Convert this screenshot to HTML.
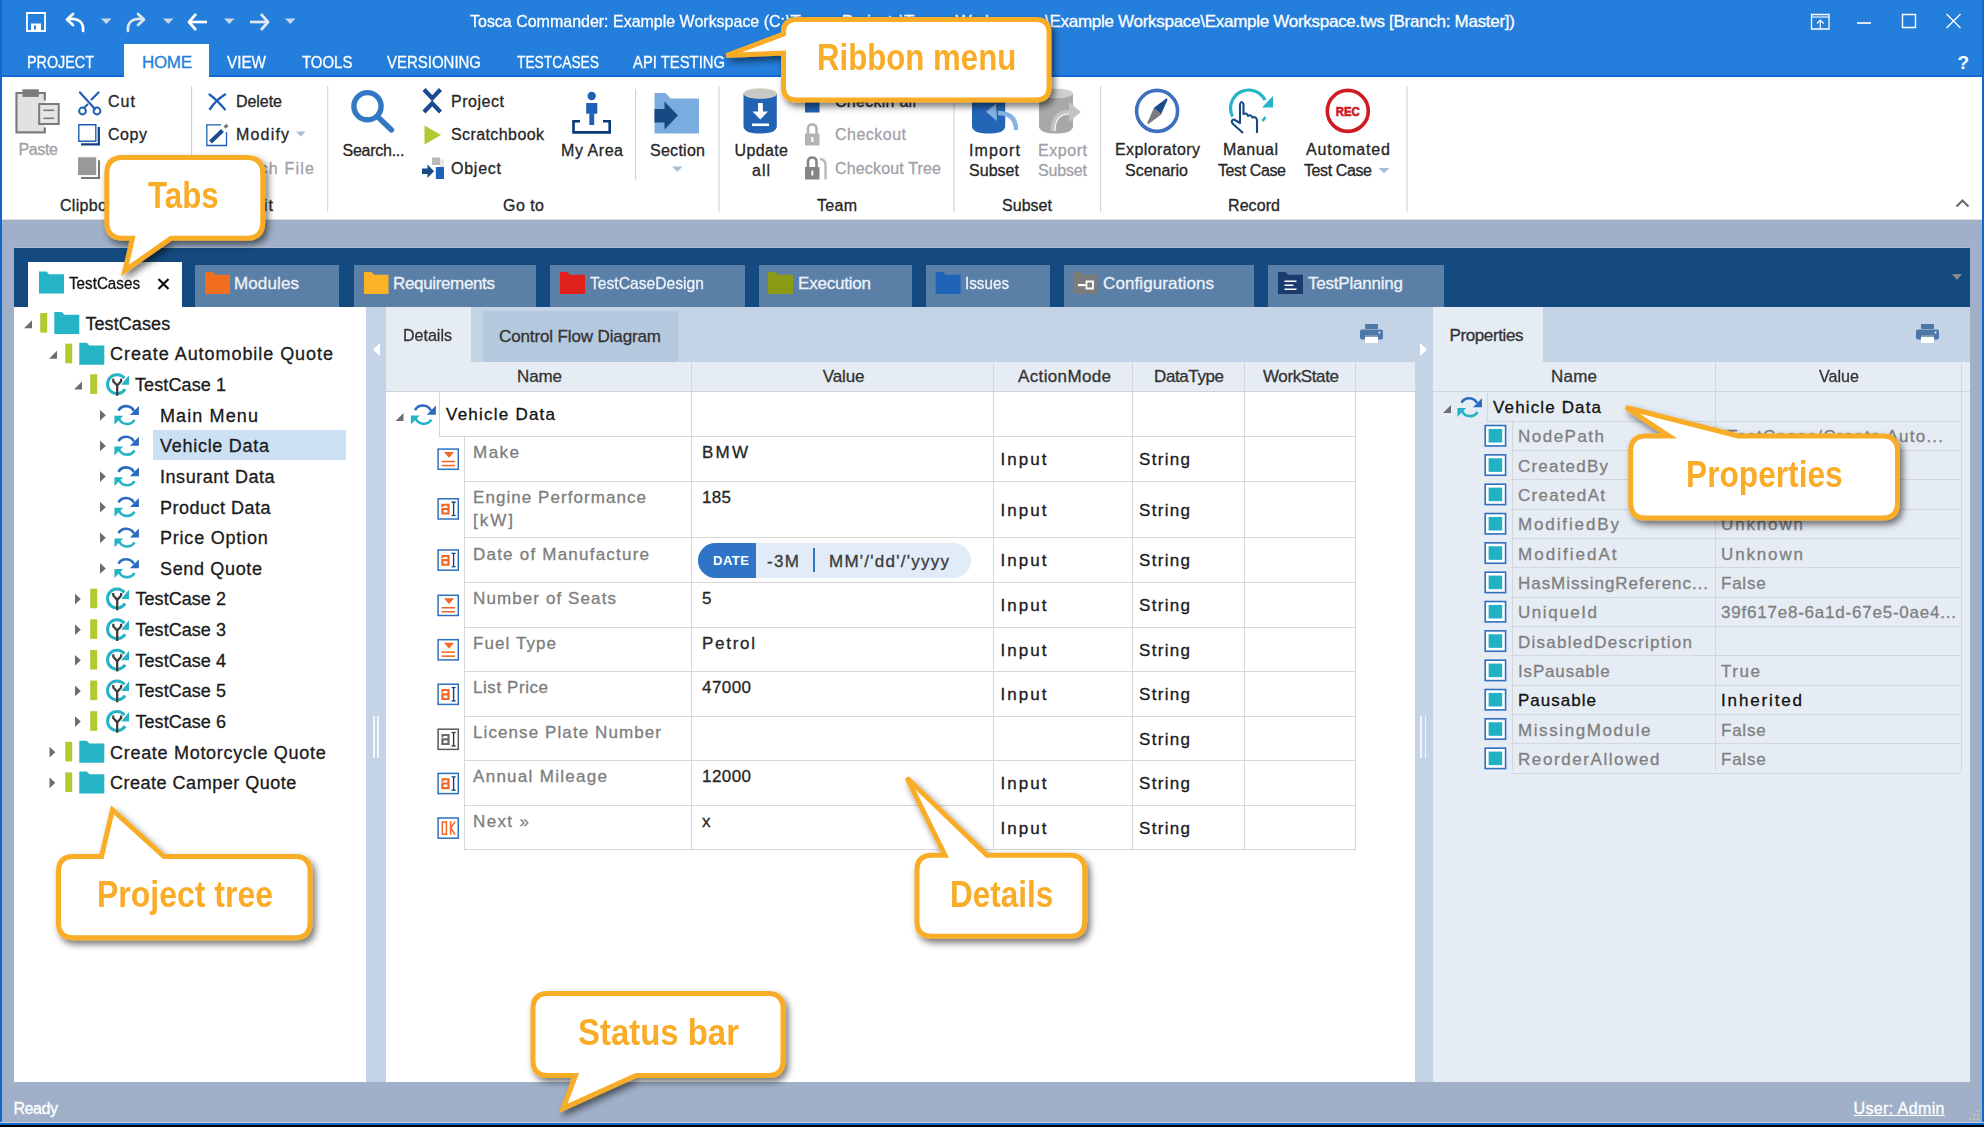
<!DOCTYPE html>
<html><head><meta charset="utf-8"><title>Tosca Commander</title>
<style>
html,body{margin:0;padding:0;}
body{width:1984px;height:1127px;overflow:hidden;position:relative;background:#a0b0c8;font-family:"Liberation Sans", sans-serif;}
div,svg{box-sizing:border-box;}
</style></head><body>
<div style="position:absolute;left:0px;top:0px;width:1984px;height:76px;background:#247edb;"></div>
<div style="position:absolute;left:0px;top:75px;width:1984px;height:1.6px;background:#0f69d4;"></div>
<div style="position:absolute;left:0px;top:76.6px;width:1984px;height:143.4px;background:#ffffff;"></div>
<div style="position:absolute;left:0px;top:219px;width:1984px;height:1px;background:#dcdcdc;"></div>
<div style="position:absolute;left:124px;top:44px;width:85px;height:33.6px;background:#ffffff;"></div>
<div style="position:absolute;left:14px;top:246.5px;width:1956px;height:1.5px;background:#adbbd0;"></div>
<div style="position:absolute;left:14px;top:248px;width:1956px;height:59px;background:#154a80;"></div>
<div style="position:absolute;left:14px;top:307px;width:352px;height:775px;background:#ffffff;"></div>
<div style="position:absolute;left:366px;top:307px;width:20px;height:775px;background:#c4d4e6;"></div>
<div style="position:absolute;left:386px;top:307px;width:1029px;height:55px;background:#c4d4e6;"></div>
<div style="position:absolute;left:386px;top:307px;width:85px;height:55px;background:#e6ecf4;"></div>
<div style="position:absolute;left:483px;top:311px;width:195px;height:51px;background:#b4c8de;"></div>
<div style="position:absolute;left:386px;top:362px;width:1029px;height:30px;background:#e6ecf4;"></div>
<div style="position:absolute;left:386px;top:391px;width:1029px;height:1px;background:#d2d2d2;"></div>
<div style="position:absolute;left:386px;top:392px;width:1029px;height:690px;background:#ffffff;"></div>
<div style="position:absolute;left:1415px;top:307px;width:18px;height:775px;background:#c4d4e6;"></div>
<div style="position:absolute;left:1433px;top:307px;width:537px;height:775px;background:#c4d4e6;"></div>
<div style="position:absolute;left:1433px;top:307px;width:110px;height:55px;background:#e6ecf4;"></div>
<div style="position:absolute;left:1433px;top:362px;width:537px;height:720px;background:#e6ecf4;"></div>
<div style="position:absolute;left:0px;top:0px;width:2px;height:1127px;background:#1068cf;"></div>
<div style="position:absolute;left:1982px;top:0px;width:2px;height:1127px;background:#1068cf;"></div>
<div style="position:absolute;left:0px;top:1122px;width:1984px;height:1px;background:#c8ced8;"></div>
<div style="position:absolute;left:0px;top:1123px;width:1984px;height:2px;background:#1068cf;"></div>
<div style="position:absolute;left:0px;top:1125px;width:1984px;height:2px;background:#000000;"></div>
<div style="position:absolute;left:28px;top:262px;width:154px;height:46px;background:#ffffff;"></div>
<div style="position:absolute;left:195px;top:265px;width:144px;height:42px;background:#5b80a8;"></div>
<div style="position:absolute;left:354px;top:265px;width:182px;height:42px;background:#5b80a8;"></div>
<div style="position:absolute;left:550px;top:265px;width:195px;height:42px;background:#5b80a8;"></div>
<div style="position:absolute;left:759px;top:265px;width:153px;height:42px;background:#5b80a8;"></div>
<div style="position:absolute;left:926px;top:265px;width:123.59999999999991px;height:42px;background:#5b80a8;"></div>
<div style="position:absolute;left:1063.7px;top:265px;width:190.79999999999995px;height:42px;background:#5b80a8;"></div>
<div style="position:absolute;left:1268px;top:265px;width:175.70000000000005px;height:42px;background:#5b80a8;"></div>
<svg style="position:absolute;left:1950px;top:272px;" width="14" height="10" viewBox="0 0 14 10"><path d="M2 2 L12 2 L7 8 Z" fill="#8a8a8a"/></svg>
<div style="position:absolute;left:153.4px;top:430.2px;width:193px;height:30.3px;background:#cce0f4;"></div>
<svg style="position:absolute;left:370px;top:340px;" width="14" height="20" viewBox="0 0 14 20"><path d="M10 3 L10 16 L3 9.5 Z" fill="#ffffff"/></svg>
<svg style="position:absolute;left:1417px;top:340px;" width="14" height="20" viewBox="0 0 14 20"><path d="M3 3 L3 16 L10 9.5 Z" fill="#ffffff"/></svg>
<div style="position:absolute;left:373px;top:716px;width:1.6px;height:41.5px;background:#f4f7fb;"></div>
<div style="position:absolute;left:377.2px;top:716px;width:1.6px;height:41.5px;background:#f4f7fb;"></div>
<div style="position:absolute;left:1420.4px;top:716px;width:1.6px;height:41.5px;background:#f4f7fb;"></div>
<div style="position:absolute;left:1424.6px;top:716px;width:1.6px;height:41.5px;background:#f4f7fb;"></div>
<div style="position:absolute;left:691px;top:362px;width:1px;height:30px;background:#d7d7d7;"></div>
<div style="position:absolute;left:993px;top:362px;width:1px;height:30px;background:#d7d7d7;"></div>
<div style="position:absolute;left:1132px;top:362px;width:1px;height:30px;background:#d7d7d7;"></div>
<div style="position:absolute;left:1244px;top:362px;width:1px;height:30px;background:#d7d7d7;"></div>
<div style="position:absolute;left:1355px;top:362px;width:1px;height:30px;background:#d7d7d7;"></div>
<div style="position:absolute;left:439px;top:392px;width:1px;height:44.4px;background:#d7d7d7;"></div>
<div style="position:absolute;left:439px;top:436px;width:917px;height:1px;background:#d7d7d7;"></div>
<div style="position:absolute;left:691px;top:392px;width:1px;height:458px;background:#d7d7d7;"></div>
<div style="position:absolute;left:993px;top:392px;width:1px;height:458px;background:#d7d7d7;"></div>
<div style="position:absolute;left:1132px;top:392px;width:1px;height:458px;background:#d7d7d7;"></div>
<div style="position:absolute;left:1244px;top:392px;width:1px;height:458px;background:#d7d7d7;"></div>
<div style="position:absolute;left:1355px;top:392px;width:1px;height:458px;background:#d7d7d7;"></div>
<div style="position:absolute;left:464px;top:436px;width:1px;height:414px;background:#d7d7d7;"></div>
<div style="position:absolute;left:464px;top:481px;width:892px;height:1px;background:#d7d7d7;"></div>
<div style="position:absolute;left:464px;top:537px;width:892px;height:1px;background:#d7d7d7;"></div>
<div style="position:absolute;left:464px;top:582px;width:892px;height:1px;background:#d7d7d7;"></div>
<div style="position:absolute;left:464px;top:627px;width:892px;height:1px;background:#d7d7d7;"></div>
<div style="position:absolute;left:464px;top:671px;width:892px;height:1px;background:#d7d7d7;"></div>
<div style="position:absolute;left:464px;top:716px;width:892px;height:1px;background:#d7d7d7;"></div>
<div style="position:absolute;left:464px;top:760px;width:892px;height:1px;background:#d7d7d7;"></div>
<div style="position:absolute;left:464px;top:805px;width:892px;height:1px;background:#d7d7d7;"></div>
<div style="position:absolute;left:464px;top:849px;width:892px;height:1px;background:#d7d7d7;"></div>
<div style="position:absolute;left:697.5px;top:542.8px;width:273px;height:35px;border-radius:17.5px;background:#e1ecf8;overflow:hidden"><div style="position:absolute;left:0;top:0;width:58.5px;height:35px;background:#2f74c6"></div></div>
<div style="position:absolute;left:813px;top:548px;width:2px;height:24px;background:#2f74c6;"></div>
<div style="position:absolute;left:1714.5px;top:362px;width:1px;height:30px;background:#d3d6dc;"></div>
<div style="position:absolute;left:1960.5px;top:362px;width:1px;height:30px;background:#d3d6dc;"></div>
<div style="position:absolute;left:1433px;top:391px;width:537px;height:1px;background:#d3d6dc;"></div>
<div style="position:absolute;left:1486.5px;top:392px;width:1px;height:29px;background:#d3d6dc;"></div>
<div style="position:absolute;left:1486px;top:421px;width:475px;height:1px;background:#d3d6dc;"></div>
<div style="position:absolute;left:1511px;top:450px;width:450px;height:1px;background:#d3d6dc;"></div>
<div style="position:absolute;left:1511px;top:479px;width:450px;height:1px;background:#d3d6dc;"></div>
<div style="position:absolute;left:1511px;top:509px;width:450px;height:1px;background:#d3d6dc;"></div>
<div style="position:absolute;left:1511px;top:538px;width:450px;height:1px;background:#d3d6dc;"></div>
<div style="position:absolute;left:1511px;top:567px;width:450px;height:1px;background:#d3d6dc;"></div>
<div style="position:absolute;left:1511px;top:597px;width:450px;height:1px;background:#d3d6dc;"></div>
<div style="position:absolute;left:1511px;top:626px;width:450px;height:1px;background:#d3d6dc;"></div>
<div style="position:absolute;left:1511px;top:655px;width:450px;height:1px;background:#d3d6dc;"></div>
<div style="position:absolute;left:1511px;top:685px;width:450px;height:1px;background:#d3d6dc;"></div>
<div style="position:absolute;left:1511px;top:714px;width:450px;height:1px;background:#d3d6dc;"></div>
<div style="position:absolute;left:1511px;top:743px;width:450px;height:1px;background:#d3d6dc;"></div>
<div style="position:absolute;left:1511px;top:773px;width:450px;height:1px;background:#d3d6dc;"></div>
<div style="position:absolute;left:1511.5px;top:421px;width:1px;height:350px;background:#d3d6dc;"></div>
<div style="position:absolute;left:1714.5px;top:392px;width:1px;height:379px;background:#d3d6dc;"></div>
<div style="position:absolute;left:1960.5px;top:392px;width:1px;height:379px;background:#d3d6dc;"></div>
<svg style="position:absolute;left:0px;top:0px;" width="1984" height="1127" viewBox="0 0 1984 1127"><path d="M27,13 H45 V31 H27 Z" stroke="#ffffff" stroke-width="1.8" fill="none" /><rect x="31.00" y="23.50" width="10.00" height="7.50" fill="#ffffff" /><rect x="34.00" y="25.50" width="2.00" height="4.00" fill="#247edb" /><path d="M83,31 C84,22 78,18 70,19" stroke="#ffffff" stroke-width="2.7" fill="none" stroke-linecap="round"/><path d="M73,14 L67,19.5 L73,25" stroke="#ffffff" stroke-width="2.7" fill="none" stroke-linecap="round" stroke-linejoin="round"/><path d="M128,31 C127,22 133,18 141,19" stroke="#dfe6ee" stroke-width="2.7" fill="none" stroke-linecap="round"/><path d="M138,14 L144,19.5 L138,25" stroke="#dfe6ee" stroke-width="2.7" fill="none" stroke-linecap="round" stroke-linejoin="round"/><path d="M189,22 H207" stroke="#ffffff" stroke-width="2.7" fill="none" /><path d="M196,14 L189,22 L196,30" stroke="#ffffff" stroke-width="2.7" fill="none" stroke-linejoin="round"/><path d="M250,22 H268" stroke="#e2e8ef" stroke-width="2.7" fill="none" /><path d="M261,14 L268,22 L261,30" stroke="#e2e8ef" stroke-width="2.7" fill="none" stroke-linejoin="round"/><polygon points="101.00,18.50 111.50,18.50 106.25,24.00" fill="#c9d6e6"/><polygon points="163.00,18.50 173.50,18.50 168.25,24.00" fill="#c9d6e6"/><polygon points="224.00,18.50 234.50,18.50 229.25,24.00" fill="#c9d6e6"/><polygon points="285.00,18.50 295.50,18.50 290.25,24.00" fill="#c9d6e6"/><path d="M1811.5,14.5 H1829 V29 H1811.5 Z" stroke="#ffffff" stroke-width="1.3" fill="none" /><path d="M1811.5,17 H1829" stroke="#ffffff" stroke-width="1.1" fill="none" /><path d="M1820.3,29 V20" stroke="#ffffff" stroke-width="1.2" fill="none" /><path d="M1817,23.5 L1820.3,20 L1823.6,23.5" stroke="#ffffff" stroke-width="1.2" fill="none" /><rect x="1857.00" y="22.20" width="14.00" height="1.60" fill="#ffffff" /><path d="M1902.5,14.5 H1915.5 V27.5 H1902.5 Z" stroke="#ffffff" stroke-width="1.4" fill="none" /><path d="M1946.5,14 L1960.5,28 M1960.5,14 L1946.5,28" stroke="#ffffff" stroke-width="1.3" fill="none" /><text x="1957.5" y="69" font-family="Liberation Sans" font-weight="700" font-size="19" fill="#ffffff">?</text><rect x="17.50" y="94.00" width="27.00" height="37.50" fill="#e2e2e2" /><path d="M44.8,100.5 V93 H16.5 V132.3 H44.8 V127.5" stroke="#7b7b7b" stroke-width="2.2" fill="none" /><rect x="22.40" y="89.30" width="16.40" height="7.60" fill="#7b7b7b" /><path d="M39.2,104 H58.7 V124 H39.2 Z" stroke="#7b7b7b" stroke-width="2" fill="#e6e6e6" /><rect x="43.30" y="109.50" width="11.00" height="1.60" fill="#7b7b7b" /><rect x="43.30" y="117.50" width="11.00" height="1.60" fill="#7b7b7b" /><path d="M80,92.4 L95,109" stroke="#1f5fb5" stroke-width="2.2" fill="none" stroke-linecap="round"/><path d="M98.5,92.4 L91.5,99.5" stroke="#1f5fb5" stroke-width="2.2" fill="none" stroke-linecap="round"/><circle cx="82.5" cy="111" r="3.4" stroke="#1f5fb5" stroke-width="2" fill="none"/><circle cx="97" cy="111" r="3.4" stroke="#1f5fb5" stroke-width="2" fill="none"/><path d="M84,108 L88,104" stroke="#1f5fb5" stroke-width="2" fill="none" /><path d="M78.8,124.8 H95.8 V141.3 H78.8 Z" stroke="#1f5fb5" stroke-width="1.4" fill="#ffffff" /><path d="M81,144.3 H98.8 V127" stroke="#0d3f82" stroke-width="2.2" fill="none" /><rect x="78.00" y="157.30" width="18.20" height="17.80" fill="#999999" /><path d="M81,178 H99 V160.2" stroke="#777777" stroke-width="2" fill="none" /><path d="M209.5,94.5 Q217,100 225,109.5" stroke="#1f5fb5" stroke-width="2.2" fill="none" stroke-linecap="round"/><path d="M225,94.5 Q216,100 210,109" stroke="#1f5fb5" stroke-width="2.4" fill="none" stroke-linecap="round"/><path d="M221,124.8 H206.8 V145.5 H226.5 V132" stroke="#1f5fb5" stroke-width="1.3" fill="none" /><path d="M210.5,142 L222.5,130.5" stroke="#1b4d8d" stroke-width="4" fill="none" stroke-linecap="butt"/><path d="M224.5,127.5 L227.5,125" stroke="#777777" stroke-width="3" fill="none" /><rect x="191.10" y="86.00" width="1.00" height="126.00" fill="#d0d0d0" /><rect x="327.20" y="86.00" width="1.00" height="126.00" fill="#d0d0d0" /><rect x="635.10" y="89.00" width="1.00" height="91.00" fill="#d0d0d0" /><rect x="718.50" y="86.00" width="1.00" height="126.00" fill="#d0d0d0" /><rect x="953.50" y="86.00" width="1.00" height="126.00" fill="#d0d0d0" /><rect x="1100.20" y="86.00" width="1.00" height="126.00" fill="#d0d0d0" /><rect x="1406.50" y="86.00" width="1.00" height="126.00" fill="#d0d0d0" /><circle cx="367.5" cy="106.2" r="13.6" stroke="#3278c2" stroke-width="5.4" fill="none"/><path d="M379.5,118.5 L391.5,130" stroke="#3278c2" stroke-width="5.4" fill="none" stroke-linecap="round"/><path d="M424,89.5 L432.2,98.3 L440.5,89.5" stroke="#1b4a90" stroke-width="4.2" fill="none" /><path d="M424,112 L432.2,103.2 L440.5,112" stroke="#1b4a90" stroke-width="4.2" fill="none" /><polygon points="424.50,125.50 441.00,135.00 424.50,144.50" fill="#b1c933"/><rect x="432.00" y="157.50" width="8.00" height="7.50" fill="#b9b9b9" /><rect x="440.00" y="159.50" width="4.00" height="7.50" fill="#ece6dc" /><rect x="435.80" y="167.00" width="8.20" height="12.00" fill="#1f63b8" /><polygon points="422.00,168.50 427.50,168.50 427.50,164.50 434.00,171.30 427.50,178.00 427.50,174.00 422.00,174.00" fill="#1a4b85"/><circle cx="591.7" cy="96" r="4.2" fill="#1f60b6"/><rect x="586.20" y="103.00" width="11.10" height="10.70" fill="#1f60b6" /><rect x="589.30" y="113.50" width="4.90" height="11.50" fill="#1f60b6" /><path d="M580,121.3 H573.5 V132.4 H609.7 V121.3 H603" stroke="#0a3a78" stroke-width="2.6" fill="none" /><polygon points="654.50,93.00 665.50,93.00 670.50,98.50 699.00,98.50 699.00,133.50 654.50,133.50" fill="#7aacdf"/><polygon points="654.50,109.00 664.50,109.00 664.50,101.50 678.00,115.50 664.50,129.50 664.50,122.50 654.50,122.50" fill="#174a82"/><polygon points="672.00,166.50 682.50,166.50 677.25,172.00" fill="#a9bdd7"/><polygon points="296.00,131.50 305.50,131.50 300.75,136.50" fill="#a9bdd7"/><path d="M743.5,94 V126 Q743.5,133.5 760,133.5 Q776.8,133.5 776.8,126 V94 Z" stroke="none" stroke-width="1" fill="#2162b4" /><ellipse cx="760.2" cy="93.5" rx="16.6" ry="4.8" fill="#c7c7c7" stroke="#ddd2c0" stroke-width="1"/><rect x="758.00" y="103.00" width="4.80" height="10.00" fill="#ffffff" /><polygon points="752.50,111.50 768.00,111.50 760.30,119.50" fill="#ffffff"/><rect x="752.00" y="123.50" width="17.00" height="2.60" fill="#ffffff" /><rect x="805.00" y="102.00" width="14.50" height="10.50" fill="#2162b4" /><rect x="805.00" y="133.50" width="14.50" height="12.00" fill="#b3b3b3" /><path d="M808,134 V129 Q808,124.5 812.2,124.5 Q816.5,124.5 816.5,129 V134" stroke="#b3b3b3" stroke-width="2.6" fill="none" /><rect x="811.30" y="137.00" width="2.00" height="5.00" fill="#ffffff" /><rect x="805.00" y="167.00" width="14.50" height="12.50" fill="#858585" /><path d="M808,167.5 V162 Q808,157.5 812.2,157.5 Q816.5,157.5 816.5,162 V167.5" stroke="#858585" stroke-width="2.6" fill="none" /><rect x="811.30" y="170.50" width="2.00" height="5.00" fill="#ffffff" /><path d="M820,159 Q825.5,159.5 825.5,165 V179.5" stroke="#b8b8b8" stroke-width="2.4" fill="none" /><path d="M972,94 V126 Q972,133.5 988.5,133.5 Q1005.2,133.5 1005.2,126 V94 Z" stroke="none" stroke-width="1" fill="#2465b6" /><path d="M1016,130 Q1016,113 998,113" stroke="#86b4e2" stroke-width="4.5" fill="none" /><polygon points="986.00,111.80 996.00,103.50 997.00,121.00" fill="#86b4e2"/><path d="M1039,94 V126 Q1039,133.5 1056,133.5 Q1073,133.5 1073,126 V94 Z" stroke="none" stroke-width="1" fill="#a8a8a8" /><ellipse cx="1056" cy="93.5" rx="17" ry="4.8" fill="#cfcfcf"/><path d="M1053,131 Q1053,112 1070,112" stroke="#c4c4c4" stroke-width="4.5" fill="none" /><polygon points="1081.00,112.00 1069.00,102.00 1069.00,122.00" fill="#c4c4c4"/><path d="M1055,131 Q1055,114 1069,114" stroke="#ffffff" stroke-width="1.2" fill="none" /><circle cx="1157.1" cy="110.9" r="20.5" stroke="#3f70c0" stroke-width="3.6" fill="none"/><path d="M1166.5,99.5 L1154.6,108.6 L1160.4,113.4 Z" stroke="#1a4b8c" stroke-width="2" fill="#1a4b8c" stroke-linejoin="round"/><path d="M1154.3,109.3 L1148.3,123 L1160,114.1 Z" stroke="#7d7d80" stroke-width="2" fill="#7d7d80" stroke-linejoin="round"/><path d="M1232.5,116.5 A17,17 0 0 1 1265,100" stroke="#25b5c8" stroke-width="3.2" fill="none" /><polygon points="1273.00,96.00 1273.00,107.50 1262.00,107.50" fill="#25b5c8"/><path d="M1262.5,121 L1265.5,117" stroke="#25b5c8" stroke-width="2.5" fill="none" /><path d="M1243,133 L1233,124 Q1230,120 1234,119.5 L1240,123 V104 Q1241.5,100 1243.5,104 V114 Q1247,112.5 1248,116 Q1251,114 1252.5,117.5 Q1256,116 1257,120 V133" stroke="#174a85" stroke-width="2.1" fill="none" stroke-linejoin="round"/><circle cx="1347.8" cy="110.9" r="20.5" stroke="#d01a22" stroke-width="3.6" fill="none"/><text x="1347.8" y="115.6" text-anchor="middle" font-family="Liberation Sans" font-weight="700" font-size="13.5" fill="#d01a22" stroke="#d01a22" stroke-width="0.7" transform="translate(1347.8 0) scale(0.84 1) translate(-1347.8 0)">REC</text><polygon points="1378.50,168.00 1389.50,168.00 1384.00,173.50" fill="#a9bdd7"/><path d="M1956.5,206.5 L1962.5,200.5 L1968.5,206.5" stroke="#6a6a6a" stroke-width="2.2" fill="none" /><polygon points="39.00,271.50 46.50,271.50 49.10,274.30 64.00,274.30 64.00,293.50 39.00,293.50" fill="#24b4c6"/><path d="M158.5,279 L168.5,289 M168.5,279 L158.5,289" stroke="#111111" stroke-width="2.2" fill="none" /><polygon points="205.00,272.00 212.50,272.00 215.10,274.80 230.00,274.80 230.00,294.00 205.00,294.00" fill="#f26e1f"/><polygon points="364.00,272.00 371.50,272.00 374.10,274.80 388.50,274.80 388.50,294.00 364.00,294.00" fill="#fcb225"/><polygon points="560.00,272.00 567.50,272.00 570.10,274.80 585.00,274.80 585.00,294.00 560.00,294.00" fill="#e0211b"/><polygon points="768.00,272.00 775.50,272.00 778.10,274.80 793.00,274.80 793.00,294.00 768.00,294.00" fill="#8a9a14"/><polygon points="935.60,272.00 943.10,272.00 945.70,274.80 960.60,274.80 960.60,294.00 935.60,294.00" fill="#1f63b6"/><polygon points="1073.60,272.00 1081.10,272.00 1083.70,274.80 1098.10,274.80 1098.10,294.00 1073.60,294.00" fill="#7b7b7b"/><rect x="1078.00" y="284.00" width="7.50" height="2.20" fill="#ffffff" /><path d="M1086.5,281.5 H1093 V288.5 H1086.5 Z" stroke="#ffffff" stroke-width="1.8" fill="none" /><polygon points="1278.00,272.00 1285.50,272.00 1288.10,274.80 1303.00,274.80 1303.00,294.00 1278.00,294.00" fill="#1b3a6e"/><rect x="1284.50" y="280.50" width="12.00" height="1.50" fill="#ffffff" /><rect x="1284.50" y="284.50" width="9.00" height="1.50" fill="#ffffff" /><rect x="1284.50" y="288.50" width="12.00" height="1.50" fill="#ffffff" /><polygon points="24.00,328.20 32.00,320.20 32.00,328.20" fill="#6d6d6d"/><rect x="40.20" y="313.00" width="7.00" height="19.60" fill="#b3c92f" /><polygon points="54.30,312.00 61.80,312.00 64.40,314.80 79.30,314.80 79.30,334.00 54.30,334.00" fill="#24b4c6"/><polygon points="49.00,358.83 57.00,350.83 57.00,358.83" fill="#6d6d6d"/><rect x="65.20" y="343.63" width="7.00" height="19.60" fill="#b3c92f" /><polygon points="79.30,342.63 86.80,342.63 89.40,345.43 104.30,345.43 104.30,364.63 79.30,364.63" fill="#24b4c6"/><polygon points="74.00,389.46 82.00,381.46 82.00,389.46" fill="#6d6d6d"/><rect x="90.20" y="374.26" width="7.00" height="19.60" fill="#b3c92f" /><g transform="translate(116.90 384.66)"><path d="M7.5,-6.5 A9.5,9.5 0 1 0 8.2,4.5" stroke="#27b3c7" stroke-width="3" fill="none"/><polygon points="12.1,-9.4 12.1,0 4.2,0" fill="#27b3c7"/><path d="M0.3,11.2 V0.8 M0.3,0.8 L-3.2,-3 M0.3,0.8 L3.8,-3" stroke="#3c3c3c" stroke-width="2.3" fill="none"/><path d="M-3.6,-6 V-2.5 M4.2,-6 V-2.5" stroke="#3c3c3c" stroke-width="2.2" fill="none"/></g><polygon points="100.00,409.89 105.80,415.29 100.00,420.69" fill="#6d6d6d"/><g transform="translate(126.50 415.09) scale(0.98)"><path d="M-8.2,-4.6 A9,9 0 0 1 7.6,-4.3" stroke="#2a6bbf" stroke-width="2.6" fill="none"/><polygon points="12.7,-9.2 12.7,0 3.5,0" fill="#2a6bbf"/><path d="M8.2,4.9 A9,9 0 0 1 -7.6,3.8" stroke="#27b3c7" stroke-width="2.6" fill="none"/><polygon points="-12.3,0.8 -3.4,0.8 -12.3,9.9" fill="#27b3c7"/></g><polygon points="100.00,440.52 105.80,445.92 100.00,451.32" fill="#6d6d6d"/><g transform="translate(126.50 445.72) scale(0.98)"><path d="M-8.2,-4.6 A9,9 0 0 1 7.6,-4.3" stroke="#2a6bbf" stroke-width="2.6" fill="none"/><polygon points="12.7,-9.2 12.7,0 3.5,0" fill="#2a6bbf"/><path d="M8.2,4.9 A9,9 0 0 1 -7.6,3.8" stroke="#27b3c7" stroke-width="2.6" fill="none"/><polygon points="-12.3,0.8 -3.4,0.8 -12.3,9.9" fill="#27b3c7"/></g><polygon points="100.00,471.15 105.80,476.55 100.00,481.95" fill="#6d6d6d"/><g transform="translate(126.50 476.35) scale(0.98)"><path d="M-8.2,-4.6 A9,9 0 0 1 7.6,-4.3" stroke="#2a6bbf" stroke-width="2.6" fill="none"/><polygon points="12.7,-9.2 12.7,0 3.5,0" fill="#2a6bbf"/><path d="M8.2,4.9 A9,9 0 0 1 -7.6,3.8" stroke="#27b3c7" stroke-width="2.6" fill="none"/><polygon points="-12.3,0.8 -3.4,0.8 -12.3,9.9" fill="#27b3c7"/></g><polygon points="100.00,501.78 105.80,507.18 100.00,512.58" fill="#6d6d6d"/><g transform="translate(126.50 506.98) scale(0.98)"><path d="M-8.2,-4.6 A9,9 0 0 1 7.6,-4.3" stroke="#2a6bbf" stroke-width="2.6" fill="none"/><polygon points="12.7,-9.2 12.7,0 3.5,0" fill="#2a6bbf"/><path d="M8.2,4.9 A9,9 0 0 1 -7.6,3.8" stroke="#27b3c7" stroke-width="2.6" fill="none"/><polygon points="-12.3,0.8 -3.4,0.8 -12.3,9.9" fill="#27b3c7"/></g><polygon points="100.00,532.41 105.80,537.81 100.00,543.21" fill="#6d6d6d"/><g transform="translate(126.50 537.61) scale(0.98)"><path d="M-8.2,-4.6 A9,9 0 0 1 7.6,-4.3" stroke="#2a6bbf" stroke-width="2.6" fill="none"/><polygon points="12.7,-9.2 12.7,0 3.5,0" fill="#2a6bbf"/><path d="M8.2,4.9 A9,9 0 0 1 -7.6,3.8" stroke="#27b3c7" stroke-width="2.6" fill="none"/><polygon points="-12.3,0.8 -3.4,0.8 -12.3,9.9" fill="#27b3c7"/></g><polygon points="100.00,563.04 105.80,568.44 100.00,573.84" fill="#6d6d6d"/><g transform="translate(126.50 568.24) scale(0.98)"><path d="M-8.2,-4.6 A9,9 0 0 1 7.6,-4.3" stroke="#2a6bbf" stroke-width="2.6" fill="none"/><polygon points="12.7,-9.2 12.7,0 3.5,0" fill="#2a6bbf"/><path d="M8.2,4.9 A9,9 0 0 1 -7.6,3.8" stroke="#27b3c7" stroke-width="2.6" fill="none"/><polygon points="-12.3,0.8 -3.4,0.8 -12.3,9.9" fill="#27b3c7"/></g><polygon points="75.00,593.67 80.80,599.07 75.00,604.47" fill="#6d6d6d"/><rect x="90.20" y="588.67" width="7.00" height="19.60" fill="#b3c92f" /><g transform="translate(116.90 599.07)"><path d="M7.5,-6.5 A9.5,9.5 0 1 0 8.2,4.5" stroke="#27b3c7" stroke-width="3" fill="none"/><polygon points="12.1,-9.4 12.1,0 4.2,0" fill="#27b3c7"/><path d="M0.3,11.2 V0.8 M0.3,0.8 L-3.2,-3 M0.3,0.8 L3.8,-3" stroke="#3c3c3c" stroke-width="2.3" fill="none"/><path d="M-3.6,-6 V-2.5 M4.2,-6 V-2.5" stroke="#3c3c3c" stroke-width="2.2" fill="none"/></g><polygon points="75.00,624.30 80.80,629.70 75.00,635.10" fill="#6d6d6d"/><rect x="90.20" y="619.30" width="7.00" height="19.60" fill="#b3c92f" /><g transform="translate(116.90 629.70)"><path d="M7.5,-6.5 A9.5,9.5 0 1 0 8.2,4.5" stroke="#27b3c7" stroke-width="3" fill="none"/><polygon points="12.1,-9.4 12.1,0 4.2,0" fill="#27b3c7"/><path d="M0.3,11.2 V0.8 M0.3,0.8 L-3.2,-3 M0.3,0.8 L3.8,-3" stroke="#3c3c3c" stroke-width="2.3" fill="none"/><path d="M-3.6,-6 V-2.5 M4.2,-6 V-2.5" stroke="#3c3c3c" stroke-width="2.2" fill="none"/></g><polygon points="75.00,654.93 80.80,660.33 75.00,665.73" fill="#6d6d6d"/><rect x="90.20" y="649.93" width="7.00" height="19.60" fill="#b3c92f" /><g transform="translate(116.90 660.33)"><path d="M7.5,-6.5 A9.5,9.5 0 1 0 8.2,4.5" stroke="#27b3c7" stroke-width="3" fill="none"/><polygon points="12.1,-9.4 12.1,0 4.2,0" fill="#27b3c7"/><path d="M0.3,11.2 V0.8 M0.3,0.8 L-3.2,-3 M0.3,0.8 L3.8,-3" stroke="#3c3c3c" stroke-width="2.3" fill="none"/><path d="M-3.6,-6 V-2.5 M4.2,-6 V-2.5" stroke="#3c3c3c" stroke-width="2.2" fill="none"/></g><polygon points="75.00,685.56 80.80,690.96 75.00,696.36" fill="#6d6d6d"/><rect x="90.20" y="680.56" width="7.00" height="19.60" fill="#b3c92f" /><g transform="translate(116.90 690.96)"><path d="M7.5,-6.5 A9.5,9.5 0 1 0 8.2,4.5" stroke="#27b3c7" stroke-width="3" fill="none"/><polygon points="12.1,-9.4 12.1,0 4.2,0" fill="#27b3c7"/><path d="M0.3,11.2 V0.8 M0.3,0.8 L-3.2,-3 M0.3,0.8 L3.8,-3" stroke="#3c3c3c" stroke-width="2.3" fill="none"/><path d="M-3.6,-6 V-2.5 M4.2,-6 V-2.5" stroke="#3c3c3c" stroke-width="2.2" fill="none"/></g><polygon points="75.00,716.19 80.80,721.59 75.00,726.99" fill="#6d6d6d"/><rect x="90.20" y="711.19" width="7.00" height="19.60" fill="#b3c92f" /><g transform="translate(116.90 721.59)"><path d="M7.5,-6.5 A9.5,9.5 0 1 0 8.2,4.5" stroke="#27b3c7" stroke-width="3" fill="none"/><polygon points="12.1,-9.4 12.1,0 4.2,0" fill="#27b3c7"/><path d="M0.3,11.2 V0.8 M0.3,0.8 L-3.2,-3 M0.3,0.8 L3.8,-3" stroke="#3c3c3c" stroke-width="2.3" fill="none"/><path d="M-3.6,-6 V-2.5 M4.2,-6 V-2.5" stroke="#3c3c3c" stroke-width="2.2" fill="none"/></g><polygon points="49.50,746.82 55.30,752.22 49.50,757.62" fill="#6d6d6d"/><rect x="65.20" y="741.82" width="7.00" height="19.60" fill="#b3c92f" /><polygon points="79.30,740.82 86.80,740.82 89.40,743.62 104.30,743.62 104.30,762.82 79.30,762.82" fill="#24b4c6"/><polygon points="49.50,777.45 55.30,782.85 49.50,788.25" fill="#6d6d6d"/><rect x="65.20" y="772.45" width="7.00" height="19.60" fill="#b3c92f" /><polygon points="79.30,771.45 86.80,771.45 89.40,774.25 104.30,774.25 104.30,793.45 79.30,793.45" fill="#24b4c6"/><polygon points="395.50,421.00 403.50,413.00 403.50,421.00" fill="#6d6d6d"/><g transform="translate(423.20 414.70) scale(1.0)"><path d="M-8.2,-4.6 A9,9 0 0 1 7.6,-4.3" stroke="#2a6bbf" stroke-width="2.6" fill="none"/><polygon points="12.7,-9.2 12.7,0 3.5,0" fill="#2a6bbf"/><path d="M8.2,4.9 A9,9 0 0 1 -7.6,3.8" stroke="#27b3c7" stroke-width="2.6" fill="none"/><polygon points="-12.3,0.8 -3.4,0.8 -12.3,9.9" fill="#27b3c7"/></g><rect x="438.10" y="449.10" width="20.2" height="20.2" stroke="#2f6fbf" stroke-width="1.5" fill="#ffffff"/><polygon points="444.00,452.10 454.00,452.10 449.00,457.80" fill="#f26522"/><rect x="441.50" y="460.80" width="13.50" height="1.50" fill="#f26522" /><rect x="441.50" y="464.80" width="13.50" height="1.50" fill="#f26522" /><rect x="438.10" y="498.80" width="20.2" height="20.2" stroke="#2f6fbf" stroke-width="1.5" fill="#ffffff"/><path d="M441.40,503.70 H449.60 V514.60 H441.30 V507.90 H447.40 V505.70 H443.40 V507.10 H441.40 Z M443.60,510.00 V512.50 H447.40 V510.00 Z" stroke="none" stroke-width="1" fill="#f26522" fill-rule="evenodd"/><path d="M453.60,502.60 V515.10 M451.60,502.00 Q453.60,502.60 455.60,502.00 M451.60,515.70 Q453.60,515.10 455.60,515.70" stroke="#1b3f73" stroke-width="1.4" fill="none" /><rect x="438.10" y="550.00" width="20.2" height="20.2" stroke="#2f6fbf" stroke-width="1.5" fill="#ffffff"/><path d="M441.40,554.90 H449.60 V565.80 H441.30 V559.10 H447.40 V556.90 H443.40 V558.30 H441.40 Z M443.60,561.20 V563.70 H447.40 V561.20 Z" stroke="none" stroke-width="1" fill="#f26522" fill-rule="evenodd"/><path d="M453.60,553.80 V566.30 M451.60,553.20 Q453.60,553.80 455.60,553.20 M451.60,566.90 Q453.60,566.30 455.60,566.90" stroke="#1b3f73" stroke-width="1.4" fill="none" /><rect x="438.10" y="595.30" width="20.2" height="20.2" stroke="#2f6fbf" stroke-width="1.5" fill="#ffffff"/><polygon points="444.00,598.30 454.00,598.30 449.00,604.00" fill="#f26522"/><rect x="441.50" y="607.00" width="13.50" height="1.50" fill="#f26522" /><rect x="441.50" y="611.00" width="13.50" height="1.50" fill="#f26522" /><rect x="438.10" y="639.70" width="20.2" height="20.2" stroke="#2f6fbf" stroke-width="1.5" fill="#ffffff"/><polygon points="444.00,642.70 454.00,642.70 449.00,648.40" fill="#f26522"/><rect x="441.50" y="651.40" width="13.50" height="1.50" fill="#f26522" /><rect x="441.50" y="655.40" width="13.50" height="1.50" fill="#f26522" /><rect x="438.10" y="684.20" width="20.2" height="20.2" stroke="#2f6fbf" stroke-width="1.5" fill="#ffffff"/><path d="M441.40,689.10 H449.60 V700.00 H441.30 V693.30 H447.40 V691.10 H443.40 V692.50 H441.40 Z M443.60,695.40 V697.90 H447.40 V695.40 Z" stroke="none" stroke-width="1" fill="#f26522" fill-rule="evenodd"/><path d="M453.60,688.00 V700.50 M451.60,687.40 Q453.60,688.00 455.60,687.40 M451.60,701.10 Q453.60,700.50 455.60,701.10" stroke="#1b3f73" stroke-width="1.4" fill="none" /><rect x="438.10" y="729.20" width="20.2" height="20.2" stroke="#5a5a5a" stroke-width="1.5" fill="#ffffff"/><path d="M441.40,734.10 H449.60 V745.00 H441.30 V738.30 H447.40 V736.10 H443.40 V737.50 H441.40 Z M443.60,740.40 V742.90 H447.40 V740.40 Z" stroke="none" stroke-width="1" fill="#6a6a6a" fill-rule="evenodd"/><path d="M453.60,733.00 V745.50 M451.60,732.40 Q453.60,733.00 455.60,732.40 M451.60,746.10 Q453.60,745.50 455.60,746.10" stroke="#333333" stroke-width="1.4" fill="none" /><rect x="438.10" y="773.40" width="20.2" height="20.2" stroke="#2f6fbf" stroke-width="1.5" fill="#ffffff"/><path d="M441.40,778.30 H449.60 V789.20 H441.30 V782.50 H447.40 V780.30 H443.40 V781.70 H441.40 Z M443.60,784.60 V787.10 H447.40 V784.60 Z" stroke="none" stroke-width="1" fill="#f26522" fill-rule="evenodd"/><path d="M453.60,777.20 V789.70 M451.60,776.60 Q453.60,777.20 455.60,776.60 M451.60,790.30 Q453.60,789.70 455.60,790.30" stroke="#1b3f73" stroke-width="1.4" fill="none" /><rect x="438.10" y="818.00" width="20.2" height="20.2" stroke="#2f6fbf" stroke-width="1.5" fill="#ffffff"/><path d="M442.30,821.90 H446.40 V834.30 H442.30 Z" stroke="#f26522" stroke-width="1.5" fill="none" /><path d="M450.60,821.30 V834.80 M450.80,828.10 L455.00,821.60 M450.80,828.10 L455.00,834.60" stroke="#f26522" stroke-width="1.5" fill="none" /><g transform="translate(1360 324)" fill="#4d77a6"><rect x="5" y="0" width="13" height="5" rx="1"/><rect x="0" y="5.5" width="23" height="10" rx="2"/><rect x="5" y="11.5" width="13" height="7.5" fill="#ffffff"/><rect x="5" y="11.5" width="13" height="1.2"/><circle cx="19.5" cy="8.5" r="1" fill="#ffffff"/></g><g transform="translate(1916 324)" fill="#4d77a6"><rect x="5" y="0" width="13" height="5" rx="1"/><rect x="0" y="5.5" width="23" height="10" rx="2"/><rect x="5" y="11.5" width="13" height="7.5" fill="#ffffff"/><rect x="5" y="11.5" width="13" height="1.2"/><circle cx="19.5" cy="8.5" r="1" fill="#ffffff"/></g><polygon points="1443.00,413.00 1451.00,405.00 1451.00,413.00" fill="#6d6d6d"/><g transform="translate(1469.50 407.20) scale(0.98)"><path d="M-8.2,-4.6 A9,9 0 0 1 7.6,-4.3" stroke="#2a6bbf" stroke-width="2.6" fill="none"/><polygon points="12.7,-9.2 12.7,0 3.5,0" fill="#2a6bbf"/><path d="M8.2,4.9 A9,9 0 0 1 -7.6,3.8" stroke="#27b3c7" stroke-width="2.6" fill="none"/><polygon points="-12.3,0.8 -3.4,0.8 -12.3,9.9" fill="#27b3c7"/></g><rect x="1485.20" y="425.53" width="20.4" height="20.4" stroke="#2f6fbf" stroke-width="1.6" fill="#ffffff"/><rect x="1488.60" y="428.93" width="13.60" height="13.60" fill="#22b1c3" /><rect x="1485.20" y="454.86" width="20.4" height="20.4" stroke="#2f6fbf" stroke-width="1.6" fill="#ffffff"/><rect x="1488.60" y="458.26" width="13.60" height="13.60" fill="#22b1c3" /><rect x="1485.20" y="484.19" width="20.4" height="20.4" stroke="#2f6fbf" stroke-width="1.6" fill="#ffffff"/><rect x="1488.60" y="487.59" width="13.60" height="13.60" fill="#22b1c3" /><rect x="1485.20" y="513.52" width="20.4" height="20.4" stroke="#2f6fbf" stroke-width="1.6" fill="#ffffff"/><rect x="1488.60" y="516.92" width="13.60" height="13.60" fill="#22b1c3" /><rect x="1485.20" y="542.85" width="20.4" height="20.4" stroke="#2f6fbf" stroke-width="1.6" fill="#ffffff"/><rect x="1488.60" y="546.25" width="13.60" height="13.60" fill="#22b1c3" /><rect x="1485.20" y="572.18" width="20.4" height="20.4" stroke="#2f6fbf" stroke-width="1.6" fill="#ffffff"/><rect x="1488.60" y="575.58" width="13.60" height="13.60" fill="#22b1c3" /><rect x="1485.20" y="601.51" width="20.4" height="20.4" stroke="#2f6fbf" stroke-width="1.6" fill="#ffffff"/><rect x="1488.60" y="604.91" width="13.60" height="13.60" fill="#22b1c3" /><rect x="1485.20" y="630.84" width="20.4" height="20.4" stroke="#2f6fbf" stroke-width="1.6" fill="#ffffff"/><rect x="1488.60" y="634.24" width="13.60" height="13.60" fill="#22b1c3" /><rect x="1485.20" y="660.17" width="20.4" height="20.4" stroke="#2f6fbf" stroke-width="1.6" fill="#ffffff"/><rect x="1488.60" y="663.57" width="13.60" height="13.60" fill="#22b1c3" /><rect x="1485.20" y="689.50" width="20.4" height="20.4" stroke="#2f6fbf" stroke-width="1.6" fill="#ffffff"/><rect x="1488.60" y="692.90" width="13.60" height="13.60" fill="#22b1c3" /><rect x="1485.20" y="718.83" width="20.4" height="20.4" stroke="#2f6fbf" stroke-width="1.6" fill="#ffffff"/><rect x="1488.60" y="722.23" width="13.60" height="13.60" fill="#22b1c3" /><rect x="1485.20" y="748.16" width="20.4" height="20.4" stroke="#2f6fbf" stroke-width="1.6" fill="#ffffff"/><rect x="1488.60" y="751.56" width="13.60" height="13.60" fill="#22b1c3" /><rect x="1977.00" y="1110.00" width="2.00" height="2.00" fill="#c8c0b0" /><rect x="1973.00" y="1114.00" width="2.00" height="2.00" fill="#c8c0b0" /><rect x="1977.00" y="1114.00" width="2.00" height="2.00" fill="#c8c0b0" /><rect x="1969.00" y="1118.00" width="2.00" height="2.00" fill="#c8c0b0" /><rect x="1973.00" y="1118.00" width="2.00" height="2.00" fill="#c8c0b0" /><rect x="1977.00" y="1118.00" width="2.00" height="2.00" fill="#c8c0b0" /></svg>
<div style="position:absolute;-webkit-text-stroke:0.3px currentColor;left:470.0px;top:12.3px;font-size:17px;font-weight:400;color:#ffffff;letter-spacing:0.000px;white-space:pre;line-height:normal;transform:scaleX(0.9401);transform-origin:0 0;">Tosca Commander: Example Workspace (C:</div>
<div style="position:absolute;-webkit-text-stroke:0.3px currentColor;left:786.0px;top:12.3px;font-size:17px;font-weight:400;color:#ffffff;letter-spacing:-0.413px;white-space:pre;line-height:normal;">\Tosca_Projects\Tosca_Workspaces</div>
<div style="position:absolute;-webkit-text-stroke:0.3px currentColor;left:1045.0px;top:12.3px;font-size:17px;font-weight:400;color:#ffffff;letter-spacing:-0.280px;white-space:pre;line-height:normal;">\Example Workspace\Example Workspace.tws [Branch: Master])</div>
<div style="position:absolute;-webkit-text-stroke:0.3px currentColor;left:27.0px;top:52.5px;font-size:17px;font-weight:400;color:#ffffff;letter-spacing:0.000px;white-space:pre;line-height:normal;transform:scaleX(0.8444);transform-origin:0 0;">PROJECT</div>
<div style="position:absolute;-webkit-text-stroke:0.3px currentColor;left:227.0px;top:52.5px;font-size:17px;font-weight:400;color:#ffffff;letter-spacing:0.000px;white-space:pre;line-height:normal;transform:scaleX(0.8975);transform-origin:0 0;">VIEW</div>
<div style="position:absolute;-webkit-text-stroke:0.3px currentColor;left:301.6px;top:52.5px;font-size:17px;font-weight:400;color:#ffffff;letter-spacing:0.000px;white-space:pre;line-height:normal;transform:scaleX(0.8791);transform-origin:0 0;">TOOLS</div>
<div style="position:absolute;-webkit-text-stroke:0.3px currentColor;left:387.0px;top:52.5px;font-size:17px;font-weight:400;color:#ffffff;letter-spacing:0.000px;white-space:pre;line-height:normal;transform:scaleX(0.8806);transform-origin:0 0;">VERSIONING</div>
<div style="position:absolute;-webkit-text-stroke:0.3px currentColor;left:517.0px;top:52.5px;font-size:17px;font-weight:400;color:#ffffff;letter-spacing:0.000px;white-space:pre;line-height:normal;transform:scaleX(0.8111);transform-origin:0 0;">TESTCASES</div>
<div style="position:absolute;-webkit-text-stroke:0.3px currentColor;left:633.0px;top:52.5px;font-size:17px;font-weight:400;color:#ffffff;letter-spacing:0.000px;white-space:pre;line-height:normal;transform:scaleX(0.8720);transform-origin:0 0;">API TESTING</div>
<div style="position:absolute;-webkit-text-stroke:0.3px currentColor;left:142.0px;top:52.5px;font-size:17px;font-weight:400;color:#247edb;letter-spacing:-0.333px;white-space:pre;line-height:normal;">HOME</div>
<div style="position:absolute;-webkit-text-stroke:0.3px currentColor;left:18.5px;top:141.4px;font-size:16px;font-weight:400;color:#a39fa8;letter-spacing:-0.355px;white-space:pre;line-height:normal;">Paste</div>
<div style="position:absolute;-webkit-text-stroke:0.3px currentColor;left:108.0px;top:93.0px;font-size:16px;font-weight:400;color:#262626;letter-spacing:1.047px;white-space:pre;line-height:normal;">Cut</div>
<div style="position:absolute;-webkit-text-stroke:0.3px currentColor;left:108.0px;top:126.3px;font-size:16px;font-weight:400;color:#262626;letter-spacing:0.547px;white-space:pre;line-height:normal;">Copy</div>
<div style="position:absolute;-webkit-text-stroke:0.3px currentColor;left:108.0px;top:159.9px;font-size:16px;font-weight:400;color:#262626;letter-spacing:0.066px;white-space:pre;line-height:normal;">Format</div>
<div style="position:absolute;-webkit-text-stroke:0.3px currentColor;left:236.0px;top:93.0px;font-size:16px;font-weight:400;color:#262626;letter-spacing:-0.050px;white-space:pre;line-height:normal;">Delete</div>
<div style="position:absolute;-webkit-text-stroke:0.3px currentColor;left:236.0px;top:126.3px;font-size:16px;font-weight:400;color:#262626;letter-spacing:1.175px;white-space:pre;line-height:normal;">Modify</div>
<div style="position:absolute;-webkit-text-stroke:0.3px currentColor;left:226.0px;top:159.9px;font-size:16px;font-weight:400;color:#a39fa8;letter-spacing:1.241px;white-space:pre;line-height:normal;">Attach File</div>
<div style="position:absolute;-webkit-text-stroke:0.3px currentColor;left:60.0px;top:197.0px;font-size:16px;font-weight:400;color:#262626;letter-spacing:0.314px;white-space:pre;line-height:normal;">Clipboard</div>
<div style="position:absolute;-webkit-text-stroke:0.3px currentColor;left:242.0px;top:197.0px;font-size:16px;font-weight:400;color:#262626;letter-spacing:1.141px;white-space:pre;line-height:normal;">Edit</div>
<div style="position:absolute;-webkit-text-stroke:0.3px currentColor;left:342.5px;top:142.0px;font-size:16px;font-weight:400;color:#262626;letter-spacing:-0.254px;white-space:pre;line-height:normal;">Search...</div>
<div style="position:absolute;-webkit-text-stroke:0.3px currentColor;left:451.0px;top:92.8px;font-size:16px;font-weight:400;color:#262626;letter-spacing:0.534px;white-space:pre;line-height:normal;">Project</div>
<div style="position:absolute;-webkit-text-stroke:0.3px currentColor;left:451.0px;top:126.0px;font-size:16px;font-weight:400;color:#262626;letter-spacing:0.406px;white-space:pre;line-height:normal;">Scratchbook</div>
<div style="position:absolute;-webkit-text-stroke:0.3px currentColor;left:451.0px;top:159.8px;font-size:16px;font-weight:400;color:#262626;letter-spacing:0.750px;white-space:pre;line-height:normal;">Object</div>
<div style="position:absolute;-webkit-text-stroke:0.3px currentColor;left:561.0px;top:142.0px;font-size:16px;font-weight:400;color:#262626;letter-spacing:0.552px;white-space:pre;line-height:normal;">My Area</div>
<div style="position:absolute;-webkit-text-stroke:0.3px currentColor;left:650.0px;top:142.0px;font-size:16px;font-weight:400;color:#262626;letter-spacing:0.271px;white-space:pre;line-height:normal;">Section</div>
<div style="position:absolute;-webkit-text-stroke:0.3px currentColor;left:503.0px;top:197.0px;font-size:16px;font-weight:400;color:#262626;letter-spacing:0.465px;white-space:pre;line-height:normal;">Go to</div>
<div style="position:absolute;-webkit-text-stroke:0.3px currentColor;left:734.5px;top:141.7px;font-size:16px;font-weight:400;color:#262626;letter-spacing:0.381px;white-space:pre;line-height:normal;">Update</div>
<div style="position:absolute;-webkit-text-stroke:0.3px currentColor;left:752.0px;top:161.8px;font-size:16px;font-weight:400;color:#262626;letter-spacing:0.992px;white-space:pre;line-height:normal;">all</div>
<div style="position:absolute;-webkit-text-stroke:0.3px currentColor;left:835.0px;top:93.0px;font-size:16px;font-weight:400;color:#262626;letter-spacing:0.273px;white-space:pre;line-height:normal;">Checkin all</div>
<div style="position:absolute;-webkit-text-stroke:0.3px currentColor;left:835.0px;top:126.3px;font-size:16px;font-weight:400;color:#a39fa8;letter-spacing:0.487px;white-space:pre;line-height:normal;">Checkout</div>
<div style="position:absolute;-webkit-text-stroke:0.3px currentColor;left:835.0px;top:159.9px;font-size:16px;font-weight:400;color:#a39fa8;letter-spacing:0.161px;white-space:pre;line-height:normal;">Checkout Tree</div>
<div style="position:absolute;-webkit-text-stroke:0.3px currentColor;left:817.0px;top:197.0px;font-size:16px;font-weight:400;color:#262626;letter-spacing:0.292px;white-space:pre;line-height:normal;">Team</div>
<div style="position:absolute;-webkit-text-stroke:0.3px currentColor;left:969.0px;top:141.6px;font-size:16px;font-weight:400;color:#262626;letter-spacing:1.131px;white-space:pre;line-height:normal;">Import</div>
<div style="position:absolute;-webkit-text-stroke:0.3px currentColor;left:969.0px;top:161.8px;font-size:16px;font-weight:400;color:#262626;letter-spacing:0.037px;white-space:pre;line-height:normal;">Subset</div>
<div style="position:absolute;-webkit-text-stroke:0.3px currentColor;left:1038.0px;top:141.6px;font-size:16px;font-weight:400;color:#a39fa8;letter-spacing:0.550px;white-space:pre;line-height:normal;">Export</div>
<div style="position:absolute;-webkit-text-stroke:0.3px currentColor;left:1038.0px;top:161.8px;font-size:16px;font-weight:400;color:#a39fa8;letter-spacing:-0.163px;white-space:pre;line-height:normal;">Subset</div>
<div style="position:absolute;-webkit-text-stroke:0.3px currentColor;left:1002.0px;top:197.0px;font-size:16px;font-weight:400;color:#262626;letter-spacing:0.037px;white-space:pre;line-height:normal;">Subset</div>
<div style="position:absolute;-webkit-text-stroke:0.3px currentColor;left:1115.0px;top:141.3px;font-size:16px;font-weight:400;color:#262626;letter-spacing:0.408px;white-space:pre;line-height:normal;">Exploratory</div>
<div style="position:absolute;-webkit-text-stroke:0.3px currentColor;left:1125.0px;top:161.8px;font-size:16px;font-weight:400;color:#262626;letter-spacing:-0.022px;white-space:pre;line-height:normal;">Scenario</div>
<div style="position:absolute;-webkit-text-stroke:0.3px currentColor;left:1223.0px;top:141.3px;font-size:16px;font-weight:400;color:#262626;letter-spacing:0.503px;white-space:pre;line-height:normal;">Manual</div>
<div style="position:absolute;-webkit-text-stroke:0.3px currentColor;left:1218.0px;top:161.8px;font-size:16px;font-weight:400;color:#262626;letter-spacing:-0.393px;white-space:pre;line-height:normal;">Test Case</div>
<div style="position:absolute;-webkit-text-stroke:0.3px currentColor;left:1306.0px;top:141.3px;font-size:16px;font-weight:400;color:#262626;letter-spacing:0.826px;white-space:pre;line-height:normal;">Automated</div>
<div style="position:absolute;-webkit-text-stroke:0.3px currentColor;left:1304.0px;top:161.8px;font-size:16px;font-weight:400;color:#262626;letter-spacing:-0.393px;white-space:pre;line-height:normal;">Test Case</div>
<div style="position:absolute;-webkit-text-stroke:0.3px currentColor;left:1228.0px;top:197.0px;font-size:16px;font-weight:400;color:#262626;letter-spacing:0.084px;white-space:pre;line-height:normal;">Record</div>
<div style="position:absolute;-webkit-text-stroke:0.3px currentColor;left:69.0px;top:273.5px;font-size:17px;font-weight:400;color:#111111;letter-spacing:0.000px;white-space:pre;line-height:normal;transform:scaleX(0.8945);transform-origin:0 0;">TestCases</div>
<div style="position:absolute;-webkit-text-stroke:0.3px currentColor;left:234.0px;top:273.5px;font-size:17px;font-weight:400;color:#eef2f8;letter-spacing:0.122px;white-space:pre;line-height:normal;">Modules</div>
<div style="position:absolute;-webkit-text-stroke:0.3px currentColor;left:393.0px;top:273.5px;font-size:17px;font-weight:400;color:#eef2f8;letter-spacing:-0.348px;white-space:pre;line-height:normal;">Requirements</div>
<div style="position:absolute;-webkit-text-stroke:0.3px currentColor;left:590.0px;top:273.5px;font-size:17px;font-weight:400;color:#eef2f8;letter-spacing:0.000px;white-space:pre;line-height:normal;transform:scaleX(0.9210);transform-origin:0 0;">TestCaseDesign</div>
<div style="position:absolute;-webkit-text-stroke:0.3px currentColor;left:798.0px;top:273.5px;font-size:17px;font-weight:400;color:#eef2f8;letter-spacing:-0.209px;white-space:pre;line-height:normal;">Execution</div>
<div style="position:absolute;-webkit-text-stroke:0.3px currentColor;left:965.0px;top:273.5px;font-size:17px;font-weight:400;color:#eef2f8;letter-spacing:0.000px;white-space:pre;line-height:normal;transform:scaleX(0.8954);transform-origin:0 0;">Issues</div>
<div style="position:absolute;-webkit-text-stroke:0.3px currentColor;left:1103.0px;top:273.5px;font-size:17px;font-weight:400;color:#eef2f8;letter-spacing:0.106px;white-space:pre;line-height:normal;">Configurations</div>
<div style="position:absolute;-webkit-text-stroke:0.3px currentColor;left:1308.0px;top:273.5px;font-size:17px;font-weight:400;color:#eef2f8;letter-spacing:-0.213px;white-space:pre;line-height:normal;">TestPlanning</div>
<div style="position:absolute;-webkit-text-stroke:0.3px currentColor;left:85.4px;top:313.7px;font-size:18px;font-weight:400;color:#1a1a1a;letter-spacing:0.094px;white-space:pre;line-height:normal;">TestCases</div>
<div style="position:absolute;-webkit-text-stroke:0.3px currentColor;left:110.0px;top:344.3px;font-size:18px;font-weight:400;color:#1a1a1a;letter-spacing:0.949px;white-space:pre;line-height:normal;">Create Automobile Quote</div>
<div style="position:absolute;-webkit-text-stroke:0.3px currentColor;left:135.0px;top:375.0px;font-size:18px;font-weight:400;color:#1a1a1a;letter-spacing:0.106px;white-space:pre;line-height:normal;">TestCase 1</div>
<div style="position:absolute;-webkit-text-stroke:0.3px currentColor;left:160.0px;top:405.6px;font-size:18px;font-weight:400;color:#1a1a1a;letter-spacing:1.119px;white-space:pre;line-height:normal;">Main Menu</div>
<div style="position:absolute;-webkit-text-stroke:0.3px currentColor;left:160.0px;top:436.2px;font-size:18px;font-weight:400;color:#1a1a1a;letter-spacing:0.720px;white-space:pre;line-height:normal;">Vehicle Data</div>
<div style="position:absolute;-webkit-text-stroke:0.3px currentColor;left:160.0px;top:466.9px;font-size:18px;font-weight:400;color:#1a1a1a;letter-spacing:0.545px;white-space:pre;line-height:normal;">Insurant Data</div>
<div style="position:absolute;-webkit-text-stroke:0.3px currentColor;left:160.0px;top:497.5px;font-size:18px;font-weight:400;color:#1a1a1a;letter-spacing:0.503px;white-space:pre;line-height:normal;">Product Data</div>
<div style="position:absolute;-webkit-text-stroke:0.3px currentColor;left:160.0px;top:528.1px;font-size:18px;font-weight:400;color:#1a1a1a;letter-spacing:0.787px;white-space:pre;line-height:normal;">Price Option</div>
<div style="position:absolute;-webkit-text-stroke:0.3px currentColor;left:160.0px;top:558.7px;font-size:18px;font-weight:400;color:#1a1a1a;letter-spacing:0.658px;white-space:pre;line-height:normal;">Send Quote</div>
<div style="position:absolute;-webkit-text-stroke:0.3px currentColor;left:135.5px;top:589.4px;font-size:18px;font-weight:400;color:#1a1a1a;letter-spacing:0.050px;white-space:pre;line-height:normal;">TestCase 2</div>
<div style="position:absolute;-webkit-text-stroke:0.3px currentColor;left:135.5px;top:620.0px;font-size:18px;font-weight:400;color:#1a1a1a;letter-spacing:0.050px;white-space:pre;line-height:normal;">TestCase 3</div>
<div style="position:absolute;-webkit-text-stroke:0.3px currentColor;left:135.5px;top:650.6px;font-size:18px;font-weight:400;color:#1a1a1a;letter-spacing:0.050px;white-space:pre;line-height:normal;">TestCase 4</div>
<div style="position:absolute;-webkit-text-stroke:0.3px currentColor;left:135.5px;top:681.3px;font-size:18px;font-weight:400;color:#1a1a1a;letter-spacing:0.050px;white-space:pre;line-height:normal;">TestCase 5</div>
<div style="position:absolute;-webkit-text-stroke:0.3px currentColor;left:135.5px;top:711.9px;font-size:18px;font-weight:400;color:#1a1a1a;letter-spacing:0.050px;white-space:pre;line-height:normal;">TestCase 6</div>
<div style="position:absolute;-webkit-text-stroke:0.3px currentColor;left:110.0px;top:742.5px;font-size:18px;font-weight:400;color:#1a1a1a;letter-spacing:0.709px;white-space:pre;line-height:normal;">Create Motorcycle Quote</div>
<div style="position:absolute;-webkit-text-stroke:0.3px currentColor;left:110.0px;top:773.1px;font-size:18px;font-weight:400;color:#1a1a1a;letter-spacing:0.511px;white-space:pre;line-height:normal;">Create Camper Quote</div>
<div style="position:absolute;-webkit-text-stroke:0.3px currentColor;left:403.0px;top:326.0px;font-size:17px;font-weight:400;color:#333333;letter-spacing:0.000px;white-space:pre;line-height:normal;transform:scaleX(0.9429);transform-origin:0 0;">Details</div>
<div style="position:absolute;-webkit-text-stroke:0.3px currentColor;left:499.0px;top:327.0px;font-size:17px;font-weight:400;color:#333333;letter-spacing:-0.126px;white-space:pre;line-height:normal;">Control Flow Diagram</div>
<div style="position:absolute;-webkit-text-stroke:0.3px currentColor;left:517.0px;top:366.7px;font-size:17px;font-weight:400;color:#333333;letter-spacing:-0.120px;white-space:pre;line-height:normal;">Name</div>
<div style="position:absolute;-webkit-text-stroke:0.3px currentColor;left:822.8px;top:366.7px;font-size:17px;font-weight:400;color:#333333;letter-spacing:-0.155px;white-space:pre;line-height:normal;">Value</div>
<div style="position:absolute;-webkit-text-stroke:0.3px currentColor;left:1018.0px;top:366.7px;font-size:17px;font-weight:400;color:#333333;letter-spacing:0.358px;white-space:pre;line-height:normal;">ActionMode</div>
<div style="position:absolute;-webkit-text-stroke:0.3px currentColor;left:1154.0px;top:366.7px;font-size:17px;font-weight:400;color:#333333;letter-spacing:-0.395px;white-space:pre;line-height:normal;">DataType</div>
<div style="position:absolute;-webkit-text-stroke:0.3px currentColor;left:1263.0px;top:366.7px;font-size:17px;font-weight:400;color:#333333;letter-spacing:-0.383px;white-space:pre;line-height:normal;">WorkState</div>
<div style="position:absolute;-webkit-text-stroke:0.3px currentColor;left:446.0px;top:405.2px;font-size:17px;font-weight:400;color:#111111;letter-spacing:1.232px;white-space:pre;line-height:normal;">Vehicle Data</div>
<div style="position:absolute;-webkit-text-stroke:0.3px currentColor;left:473.0px;top:443.1px;font-size:17px;font-weight:400;color:#7d7d7d;letter-spacing:1.474px;white-space:pre;line-height:normal;">Make</div>
<div style="position:absolute;-webkit-text-stroke:0.3px currentColor;left:702.0px;top:443.1px;font-size:17px;font-weight:400;color:#262626;letter-spacing:2.227px;white-space:pre;line-height:normal;">BMW</div>
<div style="position:absolute;-webkit-text-stroke:0.3px currentColor;left:1000.5px;top:449.9px;font-size:17px;font-weight:400;color:#1a1a1a;letter-spacing:2.047px;white-space:pre;line-height:normal;">Input</div>
<div style="position:absolute;-webkit-text-stroke:0.3px currentColor;left:1139.0px;top:449.9px;font-size:17px;font-weight:400;color:#1a1a1a;letter-spacing:1.316px;white-space:pre;line-height:normal;">String</div>
<div style="position:absolute;-webkit-text-stroke:0.3px currentColor;left:473.0px;top:487.8px;font-size:17px;font-weight:400;color:#7d7d7d;letter-spacing:1.060px;white-space:pre;line-height:normal;">Engine Performance</div>
<div style="position:absolute;-webkit-text-stroke:0.3px currentColor;left:473.0px;top:511.4px;font-size:17px;font-weight:400;color:#7d7d7d;letter-spacing:2.000px;white-space:pre;line-height:normal;">[kW]</div>
<div style="position:absolute;-webkit-text-stroke:0.3px currentColor;left:702.0px;top:487.8px;font-size:17px;font-weight:400;color:#262626;letter-spacing:0.312px;white-space:pre;line-height:normal;">185</div>
<div style="position:absolute;-webkit-text-stroke:0.3px currentColor;left:1000.5px;top:500.6px;font-size:17px;font-weight:400;color:#1a1a1a;letter-spacing:2.047px;white-space:pre;line-height:normal;">Input</div>
<div style="position:absolute;-webkit-text-stroke:0.3px currentColor;left:1139.0px;top:500.6px;font-size:17px;font-weight:400;color:#1a1a1a;letter-spacing:1.316px;white-space:pre;line-height:normal;">String</div>
<div style="position:absolute;-webkit-text-stroke:0.3px currentColor;left:473.0px;top:544.5px;font-size:17px;font-weight:400;color:#7d7d7d;letter-spacing:1.220px;white-space:pre;line-height:normal;">Date of Manufacture</div>
<div style="position:absolute;-webkit-text-stroke:0.3px currentColor;left:1000.5px;top:551.4px;font-size:17px;font-weight:400;color:#1a1a1a;letter-spacing:2.047px;white-space:pre;line-height:normal;">Input</div>
<div style="position:absolute;-webkit-text-stroke:0.3px currentColor;left:1139.0px;top:551.4px;font-size:17px;font-weight:400;color:#1a1a1a;letter-spacing:1.316px;white-space:pre;line-height:normal;">String</div>
<div style="position:absolute;-webkit-text-stroke:0.3px currentColor;left:473.0px;top:589.3px;font-size:17px;font-weight:400;color:#7d7d7d;letter-spacing:1.103px;white-space:pre;line-height:normal;">Number of Seats</div>
<div style="position:absolute;-webkit-text-stroke:0.3px currentColor;left:702.0px;top:589.3px;font-size:17px;font-weight:400;color:#262626;letter-spacing:0.000px;white-space:pre;line-height:normal;">5</div>
<div style="position:absolute;-webkit-text-stroke:0.3px currentColor;left:1000.5px;top:596.0px;font-size:17px;font-weight:400;color:#1a1a1a;letter-spacing:2.047px;white-space:pre;line-height:normal;">Input</div>
<div style="position:absolute;-webkit-text-stroke:0.3px currentColor;left:1139.0px;top:596.0px;font-size:17px;font-weight:400;color:#1a1a1a;letter-spacing:1.316px;white-space:pre;line-height:normal;">String</div>
<div style="position:absolute;-webkit-text-stroke:0.3px currentColor;left:473.0px;top:633.7px;font-size:17px;font-weight:400;color:#7d7d7d;letter-spacing:1.082px;white-space:pre;line-height:normal;">Fuel Type</div>
<div style="position:absolute;-webkit-text-stroke:0.3px currentColor;left:702.0px;top:633.7px;font-size:17px;font-weight:400;color:#262626;letter-spacing:1.716px;white-space:pre;line-height:normal;">Petrol</div>
<div style="position:absolute;-webkit-text-stroke:0.3px currentColor;left:1000.5px;top:640.5px;font-size:17px;font-weight:400;color:#1a1a1a;letter-spacing:2.047px;white-space:pre;line-height:normal;">Input</div>
<div style="position:absolute;-webkit-text-stroke:0.3px currentColor;left:1139.0px;top:640.5px;font-size:17px;font-weight:400;color:#1a1a1a;letter-spacing:1.316px;white-space:pre;line-height:normal;">String</div>
<div style="position:absolute;-webkit-text-stroke:0.3px currentColor;left:473.0px;top:678.2px;font-size:17px;font-weight:400;color:#7d7d7d;letter-spacing:0.564px;white-space:pre;line-height:normal;">List Price</div>
<div style="position:absolute;-webkit-text-stroke:0.3px currentColor;left:702.0px;top:678.2px;font-size:17px;font-weight:400;color:#262626;letter-spacing:0.430px;white-space:pre;line-height:normal;">47000</div>
<div style="position:absolute;-webkit-text-stroke:0.3px currentColor;left:1000.5px;top:685.2px;font-size:17px;font-weight:400;color:#1a1a1a;letter-spacing:2.047px;white-space:pre;line-height:normal;">Input</div>
<div style="position:absolute;-webkit-text-stroke:0.3px currentColor;left:1139.0px;top:685.2px;font-size:17px;font-weight:400;color:#1a1a1a;letter-spacing:1.316px;white-space:pre;line-height:normal;">String</div>
<div style="position:absolute;-webkit-text-stroke:0.3px currentColor;left:473.0px;top:723.2px;font-size:17px;font-weight:400;color:#7d7d7d;letter-spacing:1.091px;white-space:pre;line-height:normal;">License Plate Number</div>
<div style="position:absolute;-webkit-text-stroke:0.3px currentColor;left:1139.0px;top:729.8px;font-size:17px;font-weight:400;color:#1a1a1a;letter-spacing:1.316px;white-space:pre;line-height:normal;">String</div>
<div style="position:absolute;-webkit-text-stroke:0.3px currentColor;left:473.0px;top:767.4px;font-size:17px;font-weight:400;color:#7d7d7d;letter-spacing:1.292px;white-space:pre;line-height:normal;">Annual Mileage</div>
<div style="position:absolute;-webkit-text-stroke:0.3px currentColor;left:702.0px;top:767.4px;font-size:17px;font-weight:400;color:#262626;letter-spacing:0.430px;white-space:pre;line-height:normal;">12000</div>
<div style="position:absolute;-webkit-text-stroke:0.3px currentColor;left:1000.5px;top:774.2px;font-size:17px;font-weight:400;color:#1a1a1a;letter-spacing:2.047px;white-space:pre;line-height:normal;">Input</div>
<div style="position:absolute;-webkit-text-stroke:0.3px currentColor;left:1139.0px;top:774.2px;font-size:17px;font-weight:400;color:#1a1a1a;letter-spacing:1.316px;white-space:pre;line-height:normal;">String</div>
<div style="position:absolute;-webkit-text-stroke:0.3px currentColor;left:473.0px;top:812.0px;font-size:17px;font-weight:400;color:#7d7d7d;letter-spacing:1.372px;white-space:pre;line-height:normal;">Next »</div>
<div style="position:absolute;-webkit-text-stroke:0.3px currentColor;left:702.0px;top:812.0px;font-size:17px;font-weight:400;color:#262626;letter-spacing:0.000px;white-space:pre;line-height:normal;">x</div>
<div style="position:absolute;-webkit-text-stroke:0.3px currentColor;left:1000.5px;top:818.9px;font-size:17px;font-weight:400;color:#1a1a1a;letter-spacing:2.047px;white-space:pre;line-height:normal;">Input</div>
<div style="position:absolute;-webkit-text-stroke:0.3px currentColor;left:1139.0px;top:818.9px;font-size:17px;font-weight:400;color:#1a1a1a;letter-spacing:1.316px;white-space:pre;line-height:normal;">String</div>
<div style="position:absolute;-webkit-text-stroke:0.3px currentColor;left:1449.5px;top:326.3px;font-size:17px;font-weight:400;color:#333333;letter-spacing:-0.387px;white-space:pre;line-height:normal;">Properties</div>
<div style="position:absolute;-webkit-text-stroke:0.3px currentColor;left:1551.0px;top:366.7px;font-size:17px;font-weight:400;color:#333333;letter-spacing:0.214px;white-space:pre;line-height:normal;">Name</div>
<div style="position:absolute;-webkit-text-stroke:0.3px currentColor;left:1819.0px;top:366.7px;font-size:17px;font-weight:400;color:#333333;letter-spacing:0.000px;white-space:pre;line-height:normal;transform:scaleX(0.9474);transform-origin:0 0;">Value</div>
<div style="position:absolute;-webkit-text-stroke:0.3px currentColor;left:1493.0px;top:398.1px;font-size:17px;font-weight:400;color:#111111;letter-spacing:1.141px;white-space:pre;line-height:normal;">Vehicle Data</div>
<div style="position:absolute;-webkit-text-stroke:0.3px currentColor;left:1518.0px;top:427.3px;font-size:17px;font-weight:400;color:#7f7f7f;letter-spacing:1.482px;white-space:pre;line-height:normal;">NodePath</div>
<div style="position:absolute;-webkit-text-stroke:0.3px currentColor;left:1721.0px;top:427.3px;font-size:17px;font-weight:400;color:#7f7f7f;letter-spacing:1.218px;white-space:pre;line-height:normal;">/TestCases/Create Auto...</div>
<div style="position:absolute;-webkit-text-stroke:0.3px currentColor;left:1518.0px;top:456.7px;font-size:17px;font-weight:400;color:#7f7f7f;letter-spacing:1.209px;white-space:pre;line-height:normal;">CreatedBy</div>
<div style="position:absolute;-webkit-text-stroke:0.3px currentColor;left:1721.0px;top:456.7px;font-size:17px;font-weight:400;color:#7f7f7f;letter-spacing:1.854px;white-space:pre;line-height:normal;">Unknown</div>
<div style="position:absolute;-webkit-text-stroke:0.3px currentColor;left:1518.0px;top:486.0px;font-size:17px;font-weight:400;color:#7f7f7f;letter-spacing:1.307px;white-space:pre;line-height:normal;">CreatedAt</div>
<div style="position:absolute;-webkit-text-stroke:0.3px currentColor;left:1721.0px;top:486.0px;font-size:17px;font-weight:400;color:#7f7f7f;letter-spacing:1.854px;white-space:pre;line-height:normal;">Unknown</div>
<div style="position:absolute;-webkit-text-stroke:0.3px currentColor;left:1518.0px;top:515.3px;font-size:17px;font-weight:400;color:#7f7f7f;letter-spacing:1.877px;white-space:pre;line-height:normal;">ModifiedBy</div>
<div style="position:absolute;-webkit-text-stroke:0.3px currentColor;left:1721.0px;top:515.3px;font-size:17px;font-weight:400;color:#7f7f7f;letter-spacing:1.854px;white-space:pre;line-height:normal;">Unknown</div>
<div style="position:absolute;-webkit-text-stroke:0.3px currentColor;left:1518.0px;top:544.6px;font-size:17px;font-weight:400;color:#7f7f7f;letter-spacing:2.019px;white-space:pre;line-height:normal;">ModifiedAt</div>
<div style="position:absolute;-webkit-text-stroke:0.3px currentColor;left:1721.0px;top:544.6px;font-size:17px;font-weight:400;color:#7f7f7f;letter-spacing:1.854px;white-space:pre;line-height:normal;">Unknown</div>
<div style="position:absolute;-webkit-text-stroke:0.3px currentColor;left:1518.0px;top:574.0px;font-size:17px;font-weight:400;color:#7f7f7f;letter-spacing:0.949px;white-space:pre;line-height:normal;">HasMissingReferenc...</div>
<div style="position:absolute;-webkit-text-stroke:0.3px currentColor;left:1721.0px;top:574.0px;font-size:17px;font-weight:400;color:#7f7f7f;letter-spacing:0.755px;white-space:pre;line-height:normal;">False</div>
<div style="position:absolute;-webkit-text-stroke:0.3px currentColor;left:1518.0px;top:603.3px;font-size:17px;font-weight:400;color:#7f7f7f;letter-spacing:1.562px;white-space:pre;line-height:normal;">UniqueId</div>
<div style="position:absolute;-webkit-text-stroke:0.3px currentColor;left:1721.0px;top:603.3px;font-size:17px;font-weight:400;color:#7f7f7f;letter-spacing:0.779px;white-space:pre;line-height:normal;">39f617e8-6a1d-67e5-0ae4...</div>
<div style="position:absolute;-webkit-text-stroke:0.3px currentColor;left:1518.0px;top:632.6px;font-size:17px;font-weight:400;color:#7f7f7f;letter-spacing:1.267px;white-space:pre;line-height:normal;">DisabledDescription</div>
<div style="position:absolute;-webkit-text-stroke:0.3px currentColor;left:1518.0px;top:662.0px;font-size:17px;font-weight:400;color:#7f7f7f;letter-spacing:0.831px;white-space:pre;line-height:normal;">IsPausable</div>
<div style="position:absolute;-webkit-text-stroke:0.3px currentColor;left:1721.0px;top:662.0px;font-size:17px;font-weight:400;color:#7f7f7f;letter-spacing:1.557px;white-space:pre;line-height:normal;">True</div>
<div style="position:absolute;-webkit-text-stroke:0.3px currentColor;left:1518.0px;top:691.3px;font-size:17px;font-weight:400;color:#111111;letter-spacing:1.016px;white-space:pre;line-height:normal;">Pausable</div>
<div style="position:absolute;-webkit-text-stroke:0.3px currentColor;left:1721.0px;top:691.3px;font-size:17px;font-weight:400;color:#111111;letter-spacing:1.854px;white-space:pre;line-height:normal;">Inherited</div>
<div style="position:absolute;-webkit-text-stroke:0.3px currentColor;left:1518.0px;top:720.6px;font-size:17px;font-weight:400;color:#7f7f7f;letter-spacing:1.592px;white-space:pre;line-height:normal;">MissingModule</div>
<div style="position:absolute;-webkit-text-stroke:0.3px currentColor;left:1721.0px;top:720.6px;font-size:17px;font-weight:400;color:#7f7f7f;letter-spacing:0.755px;white-space:pre;line-height:normal;">False</div>
<div style="position:absolute;-webkit-text-stroke:0.3px currentColor;left:1518.0px;top:750.0px;font-size:17px;font-weight:400;color:#7f7f7f;letter-spacing:1.581px;white-space:pre;line-height:normal;">ReorderAllowed</div>
<div style="position:absolute;-webkit-text-stroke:0.3px currentColor;left:1721.0px;top:750.0px;font-size:17px;font-weight:400;color:#7f7f7f;letter-spacing:0.755px;white-space:pre;line-height:normal;">False</div>
<div style="position:absolute;-webkit-text-stroke:0.3px currentColor;left:13.4px;top:1099.8px;font-size:16px;font-weight:400;color:#ffffff;letter-spacing:-0.412px;white-space:pre;line-height:normal;">Ready</div>
<div style="position:absolute;-webkit-text-stroke:0.3px currentColor;left:1853.5px;top:1100.0px;font-size:16px;font-weight:400;color:#ffffff;letter-spacing:0.386px;white-space:pre;line-height:normal;text-decoration:underline;">User: Admin</div>
<div style="position:absolute;left:713.0px;top:553.0px;font-size:13px;font-weight:700;color:#ffffff;letter-spacing:0.521px;white-space:pre;line-height:normal;">DATE</div>
<div style="position:absolute;-webkit-text-stroke:0.3px currentColor;left:767.0px;top:552.0px;font-size:17px;font-weight:400;color:#3a3a3a;letter-spacing:1.359px;white-space:pre;line-height:normal;">-3M</div>
<div style="position:absolute;-webkit-text-stroke:0.3px currentColor;left:829.0px;top:552.0px;font-size:17px;font-weight:400;color:#3a3a3a;letter-spacing:1.256px;white-space:pre;line-height:normal;">MM&#x27;/&#x27;dd&#x27;/&#x27;yyyy</div>
<svg style="position:absolute;left:0px;top:0px;" width="1984" height="1127" viewBox="0 0 1984 1127"><defs><filter id="sh" x="-20%" y="-20%" width="140%" height="160%"><feGaussianBlur in="SourceAlpha" stdDeviation="3.5"/><feOffset dx="3" dy="4" result="o"/><feComponentTransfer><feFuncA type="linear" slope="0.55"/></feComponentTransfer><feMerge><feMergeNode/><feMergeNode in="SourceGraphic"/></feMerge></filter></defs><path d="M796.5,19.5 L1036,19.5 Q1049,19.5 1049,32.5 L1049,87 Q1049,100 1036,100 L796.5,100 Q783.5,100 783.5,87 L783.5,53 L726.5,55.5 L783.5,34 L783.5,32.5 Q783.5,19.5 796.5,19.5 Z" fill="#ffffff" stroke="#f9ac28" stroke-width="5" stroke-linejoin="miter" filter="url(#sh)"/><path d="M122.8,157.5 L246.7,157.5 Q262.7,157.5 262.7,173.5 L262.7,222.2 Q262.7,238.2 246.7,238.2 L171,238.2 L125,270.5 L132.5,238.2 L122.8,238.2 Q106.8,238.2 106.8,222.2 L106.8,173.5 Q106.8,157.5 122.8,157.5 Z" fill="#ffffff" stroke="#f9ac28" stroke-width="5" stroke-linejoin="miter" filter="url(#sh)"/><path d="M1645.7,436 L1669,436 L1626,407.5 L1738,436 L1882.5,436 Q1897.5,436 1897.5,451 L1897.5,503 Q1897.5,518 1882.5,518 L1645.7,518 Q1630.7,518 1630.7,503 L1630.7,451 Q1630.7,436 1645.7,436 Z" fill="#ffffff" stroke="#f9ac28" stroke-width="5" stroke-linejoin="miter" filter="url(#sh)"/><path d="M73.5,856.5 L101.5,856.5 L112.5,810 L164,856.5 L295,856.5 Q310,856.5 310,871.5 L310,922.8 Q310,937.8 295,937.8 L73.5,937.8 Q58.5,937.8 58.5,922.8 L58.5,871.5 Q58.5,856.5 73.5,856.5 Z" fill="#ffffff" stroke="#f9ac28" stroke-width="5" stroke-linejoin="miter" filter="url(#sh)"/><path d="M932,855.2 L945,855.2 L907,778 L987,855.2 L1069.7,855.2 Q1084.7,855.2 1084.7,870.2 L1084.7,921.2 Q1084.7,936.2 1069.7,936.2 L932,936.2 Q917,936.2 917,921.2 L917,870.2 Q917,855.2 932,855.2 Z" fill="#ffffff" stroke="#f9ac28" stroke-width="5" stroke-linejoin="miter" filter="url(#sh)"/><path d="M548,993.5 L768,993.5 Q783,993.5 783,1008.5 L783,1060.5 Q783,1075.5 768,1075.5 L636,1075.5 L563,1108.5 L575.5,1075.5 L548,1075.5 Q533,1075.5 533,1060.5 L533,1008.5 Q533,993.5 548,993.5 Z" fill="#ffffff" stroke="#f9ac28" stroke-width="5" stroke-linejoin="miter" filter="url(#sh)"/></svg>
<div style="position:absolute;left:816.7px;top:37.0px;font-size:36px;font-weight:700;color:#f9ac28;letter-spacing:0.000px;white-space:pre;line-height:normal;transform:scaleX(0.8666);transform-origin:0 0;">Ribbon menu</div>
<div style="position:absolute;left:148.4px;top:174.8px;font-size:36px;font-weight:700;color:#f9ac28;letter-spacing:0.000px;white-space:pre;line-height:normal;transform:scaleX(0.8678);transform-origin:0 0;">Tabs</div>
<div style="position:absolute;left:1686.3px;top:453.8px;font-size:36px;font-weight:700;color:#f9ac28;letter-spacing:0.000px;white-space:pre;line-height:normal;transform:scaleX(0.8800);transform-origin:0 0;">Properties</div>
<div style="position:absolute;left:96.7px;top:873.7px;font-size:36px;font-weight:700;color:#f9ac28;letter-spacing:0.000px;white-space:pre;line-height:normal;transform:scaleX(0.8885);transform-origin:0 0;">Project tree</div>
<div style="position:absolute;left:949.8px;top:873.6px;font-size:36px;font-weight:700;color:#f9ac28;letter-spacing:0.000px;white-space:pre;line-height:normal;transform:scaleX(0.8741);transform-origin:0 0;">Details</div>
<div style="position:absolute;left:578.0px;top:1012.0px;font-size:36px;font-weight:700;color:#f9ac28;letter-spacing:0.000px;white-space:pre;line-height:normal;transform:scaleX(0.9145);transform-origin:0 0;">Status bar</div>
</body></html>
